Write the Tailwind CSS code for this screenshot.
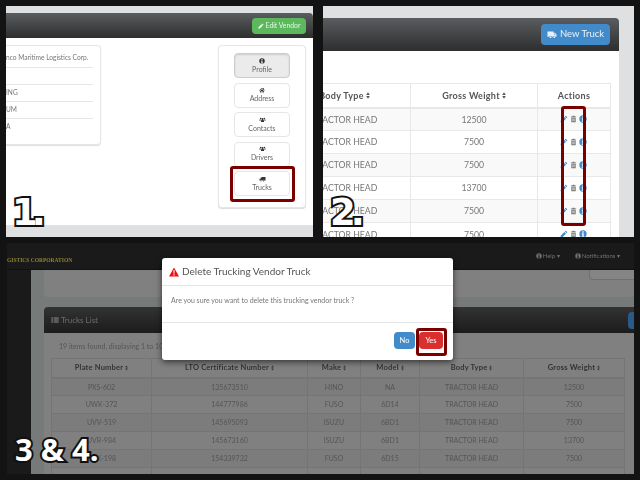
<!DOCTYPE html>
<html lang="en">
<head>
    <meta charset="UTF-8" />
    <title>Delete a vendor truck</title>
    <script src="https://cdn.jsdelivr.net/npm/@tailwindcss/browser@4"></script>
</head>
<body class="bg-[#131313] font-['Lato',sans-serif] w-[640px] h-[480px] overflow-hidden relative">

<!-- icon set -->
<svg class="hidden">
    <symbol id="i-info" viewBox="0 0 24 24"><path fill-rule="evenodd" d="M12 1a11 11 0 1 0 0 22 11 11 0 0 0 0-22zM10 4h4v4h-4zM8.500 10h5.500v8h2v2.500H8v-2.500h2v-5.500H8.500z"/></symbol>
    <symbol id="i-home" viewBox="0 0 24 24"><path d="M12 3 1 13l1.500 1.500L12 6l9.500 8.500L23 13l-4-3.600V4h-3v2.700zM4.500 15.500V22h5.500v-6h4v6h5.500v-6.500L12 8.500z"/></symbol>
    <symbol id="i-users" viewBox="0 0 24 24"><circle cx="12" cy="8" r="4"/><circle cx="4.500" cy="6" r="3"/><circle cx="19.500" cy="6" r="3"/><path d="M6 20v-4a6 6 0 0 1 12 0v4zM0 15v-3a3 3 0 0 1 4.500-2.500A7 7 0 0 0 4.500 15zM24 15v-3a3 3 0 0 0-4.500-2.500 7 7 0 0 1 0 5.500z"/></symbol>
    <symbol id="i-truck" viewBox="0 0 24 24"><path d="M8 4h16v14h-5a3 3 0 0 0-6 0H9a3 3 0 0 0-6 0H0v-6l4-5h4zM2 12h4V9H4.500z"/><circle cx="6" cy="19" r="2.500"/><circle cx="16" cy="19" r="2.500"/></symbol>
    <symbol id="i-pencil" viewBox="0 0 24 24"><path d="M17 2l5 5-2.500 2.500-5-5zM13 6l5 5L7 22H2v-5z"/></symbol>
    <symbol id="i-trash" viewBox="0 0 24 24"><path fill-rule="evenodd" d="M9 1h6l1 2.500h5V6H3V3.500h5zM4.500 7.500h15V23h-15zM8 10v10h1.500V10zM11.250 10v10h1.500V10zM14.500 10v10H16V10z"/></symbol>
    <symbol id="i-warn" viewBox="0 0 24 24"><path fill-rule="evenodd" d="M12 1 24 23H0zM10.500 8l.5 8h2l.5-8zM10.500 17.500v3h3v-3z"/></symbol>
    <symbol id="i-list" viewBox="0 0 24 24"><path d="M1 4h5v4H1zM8 4h15v4H8zM1 10h5v4H1zM8 10h15v4H8zM1 16h5v4H1zM8 16h15v4H8z"/></symbol>
    <symbol id="i-sort" viewBox="0 0 10 16"><path d="M5 0l4.500 6.500h-9zM5 16l4.500-6.500h-9z"/></symbol>
</svg>

<div class="grid grid-cols-[307px_311px] gap-x-[10px] gap-y-[6px] pl-[6px] pt-[6px]">

    <!-- Step 1: vendor page -->
    <section class="relative h-[231px] bg-[#dfe0e2] overflow-hidden flex flex-col pt-[7px] blur-[0.35px]">
        <div class="h-[25px] shrink-0 flex items-center justify-end pr-[7px] rounded-tr-sm bg-linear-to-b from-[#5a5d60] to-[#2e2e2e]">
            <button class="h-[16px] w-[54px] flex items-center justify-center gap-[2px] rounded-sm bg-[#5cb85c] text-[6.800px] text-[#e8f5e8]">
                <svg class="w-[6px] h-[6px] fill-white"><use href="#i-pencil"/></svg>Edit Vendor
            </button>
        </div>
        <div class="flex-1 bg-white flex justify-between items-start pt-[7px] pr-[7px]">
            <div class="w-[95px] h-[100px] bg-white border border-l-0 border-[#e6e6e6] rounded-r-sm shadow-[0_1px_1px_#ddd] pr-[7px] text-[6.600px] text-[#777] pt-[7px]">
                <p class="h-[15px] border-b border-[#e6e6e6] whitespace-nowrap">nco Maritime Logistics Corp.</p>
                <p class="h-[17px] border-b border-[#e6e6e6]"></p>
                <p class="h-[17px] border-b border-[#e6e6e6] pt-[3px]">ING</p>
                <p class="h-[17px] border-b border-[#e6e6e6] pt-[3px]">UM</p>
                <p class="h-[17px] pt-[3px]">A</p>
            </div>
            <div class="w-[88px] h-[163px] bg-white border border-[#e6e6e6] rounded-sm shadow-[0_1px_1px_#ddd] flex flex-col items-center gap-[4.500px] pt-[7px] text-[7px] text-[#666]">
                <div class="w-[56px] h-[25px] bg-[#ebebeb] border border-[#ccc] rounded-sm shadow-[inset_0_1px_2px_#ccc] flex flex-col items-center justify-center leading-[10px]">
                    <svg class="w-[6px] h-[6px] fill-[#333]"><use href="#i-info"/></svg>Profile
                </div>
                <div class="w-[56px] h-[25px] border border-[#e6e6e6] rounded-sm flex flex-col items-center justify-center leading-[10px]">
                    <svg class="w-[6px] h-[6px] fill-[#333]"><use href="#i-home"/></svg>Address
                </div>
                <div class="w-[56px] h-[25px] border border-[#e6e6e6] rounded-sm flex flex-col items-center justify-center leading-[10px]">
                    <svg class="w-[7px] h-[6px] fill-[#333]"><use href="#i-users"/></svg>Contacts
                </div>
                <div class="w-[56px] h-[25px] border border-[#e6e6e6] rounded-sm flex flex-col items-center justify-center leading-[10px]">
                    <svg class="w-[7px] h-[6px] fill-[#333]"><use href="#i-users"/></svg>Drivers
                </div>
                <div class="w-[56px] h-[25px] border border-[#e6e6e6] rounded-sm flex flex-col items-center justify-center leading-[10px]">
                    <svg class="w-[7px] h-[6px] fill-[#333]"><use href="#i-truck"/></svg>Trucks
                </div>
            </div>
        </div>
        <div class="h-[12px] shrink-0"></div>
    </section>

    <!-- Step 2: trucks table -->
    <section class="relative h-[231px] bg-[#dfe0e2] overflow-hidden pt-[12px] pr-[15px] flex flex-col blur-[0.35px]">
        <div class="h-[33px] shrink-0 flex items-center justify-end pr-[9px] rounded-tr-sm bg-linear-to-b from-[#5a5d60] to-[#2e2e2e]">
            <button class="w-[69px] h-[21px] flex items-center justify-center gap-[3px] rounded-sm bg-[#428bca] text-[9.500px] text-[#e8f1f8]">
                <svg class="w-[10px] h-[9px] fill-[#e8f1f8] -scale-x-100"><use href="#i-truck"/></svg>New Truck
            </button>
        </div>
        <div class="flex-1 bg-white pt-[32px] overflow-hidden">
            <table class="table-fixed border-collapse -ml-[45px] w-[331px] text-[8.700px] text-[#777] text-center">
                <colgroup><col class="w-[132px]"/><col class="w-[127px]"/><col class="w-[73px]"/></colgroup>
                <thead class="font-bold text-[#555] text-[9px] tracking-[0.3px]">
                    <tr class="h-[24px] border-y border-b-2 border-[#e8e8e8]">
                        <th class="border-x border-[#e8e8e8]"><span class="inline-flex items-center gap-[2px]">Body Type <svg class="w-[4px] h-[7px] fill-[#555]"><use href="#i-sort"/></svg></span></th>
                        <th class="border-x border-[#e8e8e8]"><span class="inline-flex items-center gap-[2px]">Gross Weight <svg class="w-[4px] h-[7px] fill-[#555]"><use href="#i-sort"/></svg></span></th>
                        <th class="border-x border-[#e8e8e8]">Actions</th>
                    </tr>
                </thead>
                <tbody>
                    <tr class="h-[23px] border-b border-[#e8e8e8] bg-[#f9f9f9]">
                        <td class="border-x border-[#e8e8e8]">TRACTOR HEAD</td><td class="border-x border-[#e8e8e8]">12500</td>
                        <td class="border-x border-[#e8e8e8]"><span class="flex justify-center items-center gap-[2px] -ml-[1px]"><svg class="w-[8px] h-[8px] fill-[#428bca]"><use href="#i-pencil"/></svg><svg class="w-[7px] h-[8px] fill-[#777]"><use href="#i-trash"/></svg><svg class="w-[8px] h-[8px] fill-[#428bca]"><use href="#i-info"/></svg></span></td>
                    </tr>
                    <tr class="h-[23px] border-b border-[#e8e8e8]">
                        <td class="border-x border-[#e8e8e8]">TRACTOR HEAD</td><td class="border-x border-[#e8e8e8]">7500</td>
                        <td class="border-x border-[#e8e8e8]"><span class="flex justify-center items-center gap-[2px] -ml-[1px]"><svg class="w-[8px] h-[8px] fill-[#428bca]"><use href="#i-pencil"/></svg><svg class="w-[7px] h-[8px] fill-[#777]"><use href="#i-trash"/></svg><svg class="w-[8px] h-[8px] fill-[#428bca]"><use href="#i-info"/></svg></span></td>
                    </tr>
                    <tr class="h-[23px] border-b border-[#e8e8e8] bg-[#f9f9f9]">
                        <td class="border-x border-[#e8e8e8]">TRACTOR HEAD</td><td class="border-x border-[#e8e8e8]">7500</td>
                        <td class="border-x border-[#e8e8e8]"><span class="flex justify-center items-center gap-[2px] -ml-[1px]"><svg class="w-[8px] h-[8px] fill-[#428bca]"><use href="#i-pencil"/></svg><svg class="w-[7px] h-[8px] fill-[#777]"><use href="#i-trash"/></svg><svg class="w-[8px] h-[8px] fill-[#428bca]"><use href="#i-info"/></svg></span></td>
                    </tr>
                    <tr class="h-[23px] border-b border-[#e8e8e8]">
                        <td class="border-x border-[#e8e8e8]">TRACTOR HEAD</td><td class="border-x border-[#e8e8e8]">13700</td>
                        <td class="border-x border-[#e8e8e8]"><span class="flex justify-center items-center gap-[2px] -ml-[1px]"><svg class="w-[8px] h-[8px] fill-[#428bca]"><use href="#i-pencil"/></svg><svg class="w-[7px] h-[8px] fill-[#777]"><use href="#i-trash"/></svg><svg class="w-[8px] h-[8px] fill-[#428bca]"><use href="#i-info"/></svg></span></td>
                    </tr>
                    <tr class="h-[23px] border-b border-[#e8e8e8] bg-[#f9f9f9]">
                        <td class="border-x border-[#e8e8e8]">TRACTOR HEAD</td><td class="border-x border-[#e8e8e8]">7500</td>
                        <td class="border-x border-[#e8e8e8]"><span class="flex justify-center items-center gap-[2px] -ml-[1px]"><svg class="w-[8px] h-[8px] fill-[#428bca]"><use href="#i-pencil"/></svg><svg class="w-[7px] h-[8px] fill-[#777]"><use href="#i-trash"/></svg><svg class="w-[8px] h-[8px] fill-[#428bca]"><use href="#i-info"/></svg></span></td>
                    </tr>
                    <tr class="h-[23px]">
                        <td class="border-x border-[#e8e8e8]">TRACTOR HEAD</td><td class="border-x border-[#e8e8e8]">7500</td>
                        <td class="border-x border-[#e8e8e8]"><span class="flex justify-center items-center gap-[2px] -ml-[1px]"><svg class="w-[8px] h-[8px] fill-[#428bca]"><use href="#i-pencil"/></svg><svg class="w-[7px] h-[8px] fill-[#777]"><use href="#i-trash"/></svg><svg class="w-[8px] h-[8px] fill-[#428bca]"><use href="#i-info"/></svg></span></td>
                    </tr>
                </tbody>
            </table>
        </div>
    </section>

    <!-- Step 3 & 4: dimmed page behind the modal -->
    <section class="col-span-2 ml-[1px] h-[231px] bg-[#1a1a1a] overflow-hidden flex flex-col blur-[0.35px]">
        <div class="h-[27px] shrink-0 flex items-center justify-between pr-[14px] border-b border-[#111]">
            <span class="font-['Liberation_Serif',serif] font-bold text-[5.500px] text-[#8f8233] whitespace-nowrap mt-[8px]">GISTICS CORPORATION</span>
            <div class="flex gap-[15px] text-[6px] text-[#707070] -mt-[1px]">
                <span class="flex items-center gap-[1px]"><svg class="w-[6px] h-[6px] fill-[#707070]"><use href="#i-info"/></svg>Help ▾</span>
                <span class="flex items-center gap-[1px]"><svg class="w-[6px] h-[6px] fill-[#707070]"><use href="#i-info"/></svg>Notifications ▾</span>
            </div>
        </div>
        <div class="flex-1 flex overflow-hidden">
            <div class="w-[24px] shrink-0"></div>
            <div class="flex-1 bg-[#767a78] flex flex-col px-[13px] pr-0 min-w-0">
                <div class="h-[27px] shrink-0 bg-[#808080] rounded-b-sm flex justify-end">
                    <div class="w-[45px] h-[10px] bg-[#858585] border-l border-b border-[#707070] rounded-bl-sm"></div>
                </div>
                <div class="h-[10px] shrink-0"></div>
                <div class="h-[26px] shrink-0 flex items-center justify-between pl-[7px] rounded-tl-sm bg-linear-to-b from-[#333] to-[#1c1c1c] text-[8px] text-[#6e6e6e]">
                    <span class="flex items-center gap-[2px]"><svg class="w-[8px] h-[8px] fill-[#6e6e6e]"><use href="#i-list"/></svg>Trucks List</span>
                    <span class="w-[6px] h-[17px] bg-[#2a5a85] rounded-l-sm"></span>
                </div>
                <div class="flex-1 bg-[#808080] pl-[7px] pt-[8px] text-[#555] overflow-hidden">
                    <p class="h-[17px] leading-[11px] ml-[8px] text-[7px]">19 items found, displaying 1 to 10</p>
                    <table class="table-fixed border-collapse w-[573px] text-center text-[7px]">
                        <colgroup><col class="w-[100px]"/><col class="w-[156px]"/><col class="w-[53px]"/><col class="w-[59px]"/><col class="w-[104px]"/><col class="w-[101px]"/></colgroup>
                        <thead class="font-bold text-[#333] text-[7.500px] tracking-[0.2px]">
                            <tr class="h-[19px] border-y border-b-2 border-[#757575]">
                                <th class="border-x border-[#757575]"><span class="inline-flex items-center gap-[2px]">Plate Number <svg class="w-[3px] h-[6px] fill-[#333]"><use href="#i-sort"/></svg></span></th>
                                <th class="border-x border-[#757575]"><span class="inline-flex items-center gap-[2px]">LTO Certificate Number <svg class="w-[3px] h-[6px] fill-[#333]"><use href="#i-sort"/></svg></span></th>
                                <th class="border-x border-[#757575]"><span class="inline-flex items-center gap-[2px]">Make <svg class="w-[3px] h-[6px] fill-[#333]"><use href="#i-sort"/></svg></span></th>
                                <th class="border-x border-[#757575]"><span class="inline-flex items-center gap-[2px]">Model <svg class="w-[3px] h-[6px] fill-[#333]"><use href="#i-sort"/></svg></span></th>
                                <th class="border-x border-[#757575]"><span class="inline-flex items-center gap-[2px]">Body Type <svg class="w-[3px] h-[6px] fill-[#333]"><use href="#i-sort"/></svg></span></th>
                                <th class="border-x border-[#757575]"><span class="inline-flex items-center gap-[2px]">Gross Weight <svg class="w-[3px] h-[6px] fill-[#333]"><use href="#i-sort"/></svg></span></th>
                            </tr>
                        </thead>
                        <tbody>
                            <tr class="h-[18px] border-b border-[#757575] bg-[#7c7c7c]"><td class="border-x border-[#757575]">PXS-602</td><td class="border-x border-[#757575]">135673510</td><td class="border-x border-[#757575]">HINO</td><td class="border-x border-[#757575]">NA</td><td class="border-x border-[#757575]">TRACTOR HEAD</td><td class="border-x border-[#757575]">12500</td></tr>
                            <tr class="h-[18px] border-b border-[#757575]"><td class="border-x border-[#757575]">UWK-372</td><td class="border-x border-[#757575]">144777986</td><td class="border-x border-[#757575]">FUSO</td><td class="border-x border-[#757575]">6D14</td><td class="border-x border-[#757575]">TRACTOR HEAD</td><td class="border-x border-[#757575]">7500</td></tr>
                            <tr class="h-[18px] border-b border-[#757575] bg-[#7c7c7c]"><td class="border-x border-[#757575]">UVV-519</td><td class="border-x border-[#757575]">145695093</td><td class="border-x border-[#757575]">ISUZU</td><td class="border-x border-[#757575]">6BD1</td><td class="border-x border-[#757575]">TRACTOR HEAD</td><td class="border-x border-[#757575]">7500</td></tr>
                            <tr class="h-[18px] border-b border-[#757575]"><td class="border-x border-[#757575]">UVR-984</td><td class="border-x border-[#757575]">145673160</td><td class="border-x border-[#757575]">ISUZU</td><td class="border-x border-[#757575]">6BD1</td><td class="border-x border-[#757575]">TRACTOR HEAD</td><td class="border-x border-[#757575]">13700</td></tr>
                            <tr class="h-[18px] border-b border-[#757575] bg-[#7c7c7c]"><td class="border-x border-[#757575]">UVK-198</td><td class="border-x border-[#757575]">154339732</td><td class="border-x border-[#757575]">FUSO</td><td class="border-x border-[#757575]">6D15</td><td class="border-x border-[#757575]">TRACTOR HEAD</td><td class="border-x border-[#757575]">7500</td></tr>
                            <tr class="h-[18px]"><td class="border-x border-[#757575]"></td><td class="border-x border-[#757575]"></td><td class="border-x border-[#757575]"></td><td class="border-x border-[#757575]"></td><td class="border-x border-[#757575]"></td><td class="border-x border-[#757575]"></td></tr>
                        </tbody>
                    </table>
                </div>
            </div>
        </div>
    </section>
</div>

<!-- Delete modal -->
<div class="absolute left-[162px] top-[258px] w-[291px] h-[102px] bg-white rounded-[3px] shadow-[0_2px_6px_rgba(0,0,0,0.6)] flex flex-col blur-[0.25px]">
    <div class="h-[28px] shrink-0 border-b border-[#e5e5e5] flex items-center gap-[3px] pl-[7px] text-[10px] text-[#555]">
        <svg class="w-[10px] h-[10px] fill-[#ee1111]"><use href="#i-warn"/></svg>Delete Trucking Vendor Truck
    </div>
    <p class="h-[37px] shrink-0 border-b border-[#e5e5e5] pl-[9px] pt-[9px] text-[7px] leading-[11px] text-[#777]">Are you sure you want to delete this trucking vendor truck ?</p>
    <div class="flex-1 flex justify-end items-start gap-[4px] pr-[10px] pt-[9px] text-[7.500px] text-white">
        <button class="w-[21px] h-[17px] rounded-sm bg-[#428bca]">No</button>
        <button class="w-[24px] h-[17px] rounded-sm bg-[#d9302f]">Yes</button>
    </div>
</div>

<!-- Callout frames -->
<div class="absolute left-[230px] top-[166px] w-[65px] h-[36px] border-[3px] border-[#7a0000] rounded-[3px]"></div>
<div class="absolute left-[561px] top-[106px] w-[25px] h-[120px] border-[3px] border-[#7a0000] rounded-[3px]"></div>
<div class="absolute left-[416px] top-[328px] w-[31px] h-[28px] border-[3px] border-[#7a0000] rounded-[3px]"></div>

<!-- Step labels -->
<span class="absolute left-[12px] top-[189px] font-['DejaVu_Sans',sans-serif] font-bold text-[37px] leading-[48px] tracking-[-6px] text-white [-webkit-text-stroke:4px_#111] [paint-order:stroke_fill]">1.</span>
<span class="absolute left-[330px] top-[189px] font-['DejaVu_Sans',sans-serif] font-bold text-[37px] leading-[48px] tracking-[-5px] text-white [-webkit-text-stroke:4px_#111] [paint-order:stroke_fill]">2.</span>
<span class="absolute left-[15px] top-[428px] font-['Open_Sans',sans-serif] font-bold text-[31px] leading-[42px] text-white [-webkit-text-stroke:4px_#111] [paint-order:stroke_fill] whitespace-nowrap">3 &amp; 4.</span>

</body>
</html>
